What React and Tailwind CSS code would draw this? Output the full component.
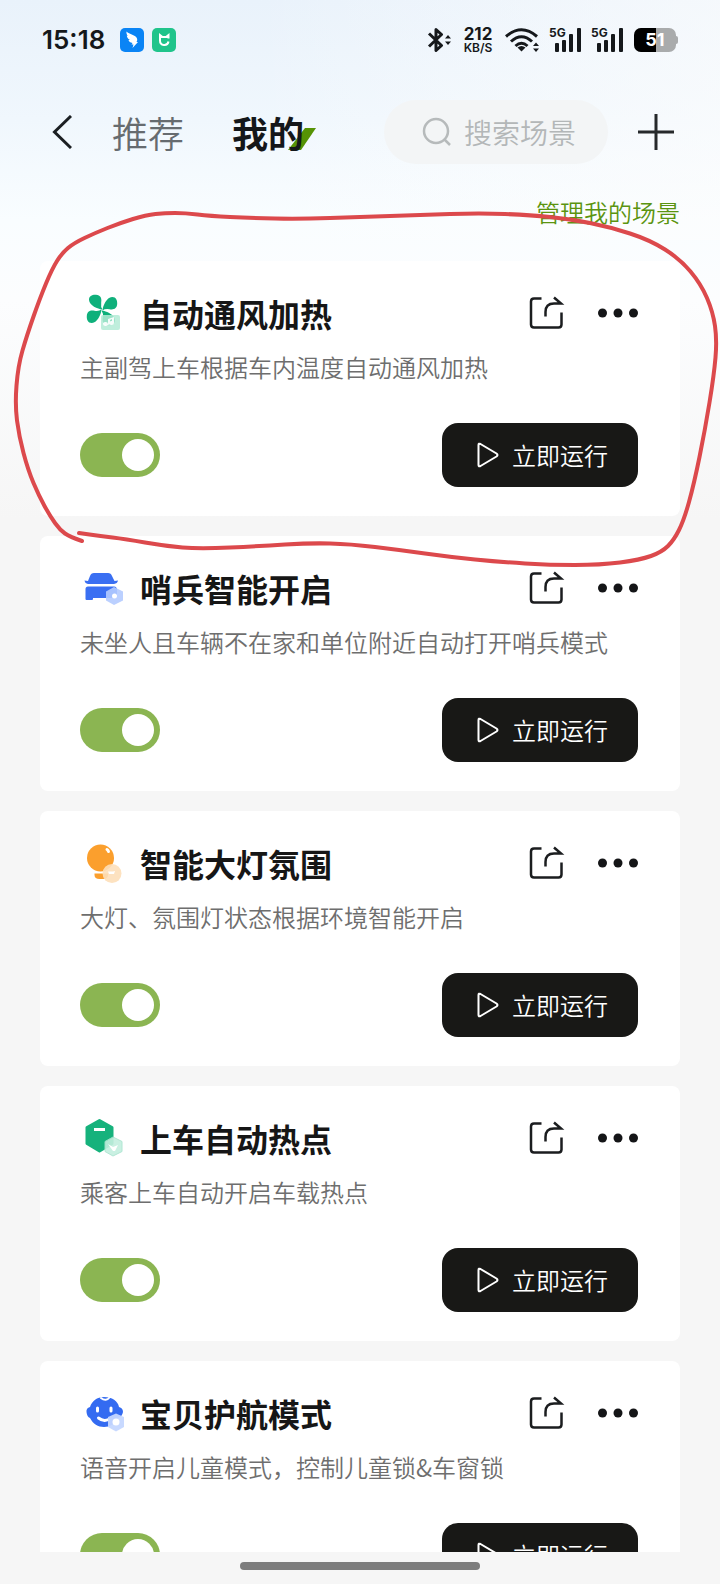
import React, { useState } from "react";
import clsx from "clsx";

const FAN_BLADE = "M22.500 16.500C17.500 16 9.500 12.500 9 7C8.800 3 12.500 1.500 16 1.800C20.500 2.200 22 5 21.200 9.500Q20.500 14 22.500 16.500Z";

const FanIcon = () => (
  <svg viewBox="0 0 40 40" className="w-10 h-10 shrink-0" aria-hidden="true">
    <g fill="#0fb07b">
      {[0, 90, 180, 270].map((angle) => (
        <path key={angle} d={FAN_BLADE} transform={`rotate(${angle} 22 17)`} />
      ))}
    </g>
    <rect x="21" y="22" width="19" height="15" rx="2" fill="#b4ebd6" opacity="0.85" />
    <path d="M26 33a2.500 2 0 1 1 2-2v-5l6-2v6a2.500 2 0 1 1-2-2v-2l-2 1v4Z" fill="#fff" opacity="0.9" />
  </svg>
);

const CarIcon = () => (
  <svg viewBox="0 0 40 40" className="w-10 h-10 shrink-0 overflow-visible" aria-hidden="true">
    <path d="M14 5H28Q31 5 32 8L34.500 13L38 12.500Q37.500 15.500 34 16H8Q5 15.500 4.500 12.500L8 13L10 8Q11 5 14 5Z" fill="#3a6ff2" />
    <path d="M8 18.500H34Q37 18.500 37 22V30H13V31Q13 32 12 32H6.500Q5.500 32 5.500 31V21Q5.500 18.500 8 18.500Z" fill="#3a6ff2" />
    <path d="M34 19L43 23.500V32.500L34 37L26 32.500V23.500Z" fill="#b4cbff" opacity="0.9" />
    <circle cx="34.500" cy="28" r="2.500" fill="#fff" />
  </svg>
);

const BulbIcon = () => (
  <svg viewBox="0 0 40 40" className="w-10 h-10 shrink-0 overflow-visible" aria-hidden="true">
    <circle cx="20.500" cy="15" r="13.500" fill="#fb9f2d" />
    <path d="M14.500 30.500H28V32q0 4-5 4h-3.500q-5 0-5-4Z" fill="#fb9f2d" />
    <path d="M27 6.500q1 .5 1.500 2" stroke="#fff" strokeWidth="3" strokeLinecap="round" fill="none" />
    <circle cx="32" cy="30.500" r="9.500" fill="#fddfb9" opacity="0.9" />
    <path d="M28 28.500h5l2-.5l-1 3h-5Z" fill="#fff" />
  </svg>
);

const BoxIcon = () => (
  <svg viewBox="0 0 40 40" className="w-10 h-10 shrink-0 overflow-visible" aria-hidden="true">
    <path
      d="M19.500 2.500L32 9.500v16L19.500 33L7 25.500V9.500Z"
      fill="#16b27c"
      stroke="#16b27c"
      strokeWidth="3"
      strokeLinejoin="round"
    />
    <rect x="14" y="10" width="11" height="3" fill="#fff" />
    <path
      d="M33 19l9 4.500v10L33 38l-8-4.500v-10Z"
      fill="#c4efdf"
      stroke="#a9e4cf"
      strokeLinejoin="round"
      opacity="0.9"
    />
    <path d="M28 26l5 3l5-2l-3 6h-2Z" fill="#fff" />
  </svg>
);

const BabyIcon = () => (
  <svg viewBox="0 0 40 40" className="w-10 h-10 shrink-0 overflow-visible" aria-hidden="true">
    <path
      d="M24 4C32 4 38 8 39 14Q43 15 43 19Q42 24 38 25C35 31 30 34 24 34C18 34 13 31 10 25Q7 24 6.500 19Q6 15 10 14C12 8 17 4 24 4Z"
      fill="#346bf1"
    />
    <path d="M21 5q5 4 9-1" stroke="#fff" strokeWidth="2" fill="none" strokeLinecap="round" />
    <path d="M17.500 15v3M31 15v3" stroke="#fff" strokeWidth="3" strokeLinecap="round" />
    <path d="M18.500 25q5 4 10 1.500" stroke="#fff" strokeWidth="3" fill="none" strokeLinecap="round" />
    <path d="M36 20.500l8 3.500v10l-8 4.500l-8-4.500V24Z" fill="#c5d7ff" opacity="0.95" />
    <circle cx="36" cy="29" r="3.500" fill="#fff" />
  </svg>
);

const scenes = [
  { id: "climate", title: "自动通风加热", desc: "主副驾上车根据车内温度自动通风加热", Icon: FanIcon },
  { id: "sentry", title: "哨兵智能开启", desc: "未坐人且车辆不在家和单位附近自动打开哨兵模式", Icon: CarIcon },
  { id: "lights", title: "智能大灯氛围", desc: "大灯、氛围灯状态根据环境智能开启", Icon: BulbIcon },
  { id: "hotspot", title: "上车自动热点", desc: "乘客上车自动开启车载热点", Icon: BoxIcon },
  { id: "baby", title: "宝贝护航模式", desc: "语音开启儿童模式，控制儿童锁&车窗锁", Icon: BabyIcon }
];

const Signal = () => (
  <span className="relative block w-8 h-6">
    <span className="absolute left-0 -top-px text-xs leading-3 font-bold">5G</span>
    <svg viewBox="0 0 32 24" className="w-8 h-6" fill="currentColor" aria-hidden="true">
      <rect x="6" y="15" width="4" height="9" rx="1" />
      <rect x="13" y="12" width="4" height="12" rx="1" />
      <rect x="20" y="6" width="4" height="18" rx="1" />
      <rect x="28" y="0" width="4" height="24" rx="1" />
    </svg>
  </span>
);

const StatusBar = () => (
  <div className="flex items-center h-20 pl-[42px] pr-[42px] text-[#15181b] font-['Inter',sans-serif]">
    <span className="w-[62px] text-[26px] leading-8 font-semibold whitespace-nowrap">15:18</span>
    <svg viewBox="0 0 24 24" className="w-6 h-6 ml-4" aria-hidden="true">
      <rect width="24" height="24" rx="5" fill="#0a84f5" />
      <path
        d="M6.500 3.500C9 6 16 7 17 10.500C17.500 12 17 13 16.500 14H18L12.500 20L13.500 16.500H11.500L12.500 15C10 14.500 9 13.500 8.500 12L10 12C7.500 10.500 7 9 6.800 7.500L8 8C6.500 6.500 6.300 5 6.500 3.500Z"
        fill="#fff"
      />
    </svg>
    <svg viewBox="0 0 24 24" className="w-6 h-6 ml-2" aria-hidden="true">
      <rect width="24" height="24" rx="5" fill="#20c48b" />
      <path d="M8 13V7L10.500 9H14L16.500 7V10.500" fill="none" stroke="#fff" strokeWidth="2" />
      <path d="M8 12.500a4.300 4.500 0 0 0 8.500 1" fill="none" stroke="#fff" strokeWidth="2" />
    </svg>

    <div className="flex items-center ml-auto">
      <svg viewBox="0 0 24 24" className="w-6 h-6" aria-hidden="true">
        <path
          d="M2 5.500L14.500 17.500L9 22.500V1.500L14.500 6.500L2 18.500"
          fill="none"
          stroke="currentColor"
          strokeWidth="3"
          strokeLinejoin="round"
        />
        <path d="M18 10.500l3-3.500l3 3.500ZM18 13.500l3 3.500l3-3.500Z" fill="currentColor" />
      </svg>
      <div className="w-[30px] ml-3 flex flex-col items-center">
        <span className="text-[17px] leading-4 font-bold">212</span>
        <span className="text-xs leading-3 font-semibold whitespace-nowrap">KB/S</span>
      </div>
      <svg viewBox="0 0 34 24" className="w-[34px] h-6 ml-3" aria-hidden="true">
        <g fill="none" stroke="currentColor" strokeWidth="3">
          <path d="M1 8.500Q16.500-5 32 8.500" />
          <path d="M6 13.500Q16.500 4 27 13.500" />
          <path d="M10.500 18Q16.500 12.500 22.500 18" />
        </g>
        <path d="M12.500 19.500q4-3 8 0l-4 4Z" fill="currentColor" />
        <path d="M28 18l3-3.500l3 3.500ZM28 20.500l3 3.500l3-3.500Z" fill="currentColor" />
      </svg>
      <div className="flex gap-[10px] ml-[10px]">
        <Signal />
        <Signal />
      </div>
      <div className="relative w-11 h-6 ml-[11px]">
        <svg viewBox="0 0 44 24" className="w-11 h-6" aria-hidden="true">
          <rect x="40" y="8" width="4" height="8" rx="2" fill="#a9abac" />
          <rect width="42" height="24" rx="7" fill="#a9abac" />
          <path d="M7 0h15v24H7a7 7 0 0 1-7-7V7a7 7 0 0 1 7-7Z" fill="#000" />
        </svg>
        <span className="absolute inset-0 pr-[2px] text-center text-lg leading-6 font-bold text-white">51</span>
      </div>
    </div>
  </div>
);

const Header = () => (
  <header className="flex items-center h-16 mt-5 pl-[52px] pr-[46px]">
    <button type="button" aria-label="返回" className="shrink-0">
      <svg viewBox="0 0 20 34" className="w-5 h-[34px]" fill="none" stroke="#1b1f22" strokeWidth="3" aria-hidden="true">
        <path d="M19 1L2.500 17L19 33" />
      </svg>
    </button>
    <nav className="flex gap-12 ml-10 text-4xl leading-[52px] whitespace-nowrap">
      <button type="button" className="font-[350] text-[#666b6f]">推荐</button>
      <button type="button" className="relative font-bold text-[#14171a]">
        <svg viewBox="0 0 28 22" className="absolute left-14 top-[22px] w-7 h-[22px]" aria-hidden="true">
          <path d="M17 0H28L13 22H0Z" fill="#569305" />
        </svg>
        <span className="relative">我的</span>
      </button>
    </nav>
    <label className="flex items-center gap-3 w-[224px] h-16 ml-auto pl-[38px] rounded-full bg-[#f3f5f6]">
      <svg viewBox="0 0 30 30" className="w-[30px] h-[30px] shrink-0" fill="none" stroke="#b6babb" strokeWidth="2.500" aria-hidden="true">
        <circle cx="14" cy="14" r="12" />
        <path d="M22 22L28 28" />
      </svg>
      <input
        type="text"
        aria-label="搜索场景"
        placeholder="搜索场景"
        className="w-28 min-w-0 bg-transparent text-[28px] leading-10 font-[350] text-[#222] placeholder:text-[#b3b7b8] outline-none"
      />
    </label>
    <button type="button" aria-label="添加场景" className="shrink-0 ml-[30px]">
      <svg viewBox="0 0 36 36" className="w-9 h-9" stroke="#26292b" strokeWidth="3" aria-hidden="true">
        <path d="M18 0V36M0 18H36" />
      </svg>
    </button>
  </header>
);

const Toggle = ({ checked, onChange, label }) => (
  <label className="relative block w-20 h-11 cursor-pointer">
    <input type="checkbox" role="switch" aria-label={label} checked={checked} onChange={onChange} className="peer sr-only" />
    <span className="flex items-center h-11 px-[6px] rounded-full bg-[#c9cbcc] justify-start peer-checked:bg-[#8bb552] peer-checked:justify-end">
      <span className="block w-8 h-8 rounded-full bg-white" />
    </span>
  </label>
);

const SceneCard = ({ scene, className }) => {
  const [enabled, setEnabled] = useState(true);
  const { title, desc, Icon } = scene;

  return (
    <article className={clsx("shrink-0 pt-7 pb-[29px] pl-10 pr-[42px] rounded-lg bg-white", className)}>
      <div className="flex items-center h-12">
        <Icon />
        <h2 className="ml-5 text-[32px] leading-[48px] font-bold text-[#161616] whitespace-nowrap">{title}</h2>
        <button type="button" aria-label="分享" className="ml-auto">
          <svg viewBox="0 0 34 34" className="w-[34px] h-[34px] overflow-visible" fill="none" stroke="#1b1d1f" strokeWidth="2.500" aria-hidden="true">
            <path d="M11.500 2.500H4Q1 2.500 1 5.500V28.500Q1 31.500 4 31.500H28.500Q31.500 31.500 31.500 28.500V16.500" />
            <path d="M15.500 20.500V16Q15.500 7.500 24 7.500H31L24 1.500" />
          </svg>
        </button>
        <button type="button" aria-label="更多" className="ml-[34px]">
          <svg viewBox="0 0 40 34" className="w-10 h-[34px]" fill="#141517" aria-hidden="true">
            <circle cx="4.500" cy="17" r="4.500" />
            <circle cx="20" cy="17" r="4.500" />
            <circle cx="35.500" cy="17" r="4.500" />
          </svg>
        </button>
      </div>

      <p className="mt-3 text-2xl leading-9 font-[350] text-[#6e6e6e] whitespace-nowrap">{desc}</p>

      <div className="flex items-center justify-between mt-[38px]">
        <Toggle label={title} checked={enabled} onChange={() => setEnabled(!enabled)} />
        <button
          type="button"
          className="flex items-center gap-3 h-16 pl-[34px] pr-[30px] rounded-2xl bg-[#181816] text-2xl font-[350] text-white whitespace-nowrap"
        >
          <svg viewBox="0 0 24 26" className="w-6 h-[26px]" fill="none" stroke="#fff" strokeWidth="2" strokeLinejoin="round" aria-hidden="true">
            <path d="M2.500 3Q2.500 1 4.500 2L20.500 11.500Q22.500 13 20.500 14.500L4.500 24Q2.500 25 2.500 23Z" />
          </svg>
          立即运行
        </button>
      </div>
    </article>
  );
};

// Freehand marker loop drawn around the first scene
const markPoints = [
  [82, 541], [70, 537], [60, 530], [50, 516], [39, 496], [28, 470], [19, 436], [15, 405], [18, 366], [27, 335],
  [40, 298], [52, 269], [62, 253], [74, 243], [95, 233], [120, 223], [146, 215], [165, 213], [185, 213], [210, 216],
  [250, 218], [300, 219], [360, 217], [420, 215], [480, 213], [530, 215], [570, 219], [610, 227], [650, 240], [680, 259],
  [701, 284], [713, 312], [717, 340], [714, 375], [705, 430], [694, 484], [684, 520], [674, 540], [662, 552], [640, 560],
  [600, 565], [550, 565], [500, 562], [450, 557], [400, 550], [350, 544], [310, 543], [260, 546], [200, 549], [165, 546],
  [125, 539], [100, 536], [79, 533]
];

const smoothPath = (points) => {
  let d = `M${points[0].join(" ")}`;
  for (let i = 1; i < points.length - 1; i++) {
    const [x, y] = points[i];
    const [nx, ny] = points[i + 1];
    d += `Q${x} ${y} ${(x + nx) / 2} ${(y + ny) / 2}`;
  }
  return `${d}L${points[points.length - 1].join(" ")}`;
};

const App = () => (
  <div className="relative flex flex-col h-screen overflow-hidden bg-[#f6f6f6] bg-[linear-gradient(to_right,transparent_35%,#fdfdfd99),linear-gradient(to_bottom,#e9f2fb_0px,#f0f7fd_120px,#f9fdff_220px,#fcfdfe_300px,#f6f6f6_520px)] bg-[length:100%_240px,100%_100%] bg-no-repeat font-['Noto_Sans_CJK_SC',sans-serif]">
    <StatusBar />
    <Header />
    <a href="#manage" className="self-end mt-[30px] mr-10 text-2xl leading-9 font-[350] text-[#5b9410]">
      管理我的场景
    </a>
    <main className="flex flex-col flex-1 gap-5 min-h-0 mt-[31px] px-10 overflow-hidden">
      {scenes.map((scene) => (
        <SceneCard key={scene.id} scene={scene} />
      ))}
    </main>
    <footer className="flex justify-center h-8 pt-[10px] shrink-0">
      <span className="block w-1/3 h-2 rounded-full bg-[#7d7d7d]" />
    </footer>
    <svg
      viewBox="0 0 720 600"
      className="absolute left-0 top-0 w-full pointer-events-none"
      fill="none"
      stroke="#dc494c"
      strokeWidth="4"
      strokeLinecap="round"
      aria-hidden="true"
    >
      <path d={smoothPath(markPoints)} />
    </svg>
  </div>
);

export default App;
